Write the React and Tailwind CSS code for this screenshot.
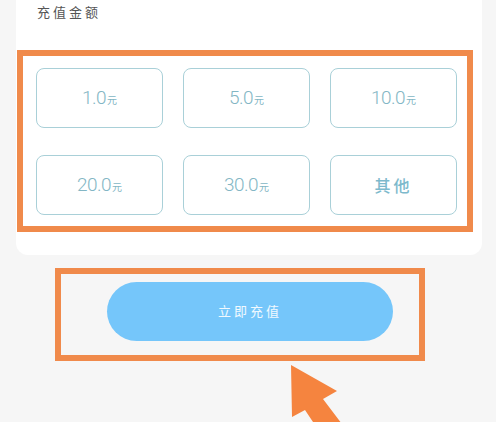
const amounts = ['1.0', '5.0', '10.0', '20.0', '30.0']

function AmountButton({ value }) {
  return (
    <div className="h-[60px] rounded-lg border border-[#a9d0d8] flex items-center justify-center bg-white">
      {value ? (
        <span className="text-[#83b6c4] flex items-baseline">
          <span className="text-[19px] [font-family:Roboto,sans-serif] font-light tracking-[-0.5px]">{value}</span>
          <span className="text-[10px] ml-px [font-family:'Noto_Sans_CJK_SC',sans-serif]">元</span>
        </span>
      ) : (
        <span className="text-[16px] font-medium tracking-[3px] text-[#7db9cc] [font-family:'Noto_Sans_CJK_SC',sans-serif]">其他</span>
      )}
    </div>
  )
}

export default function App() {
  return (
    <div className="relative w-[496px] h-[422px] overflow-hidden bg-[#f6f6f6] [font-family:'Noto_Sans','Noto_Sans_CJK_SC',sans-serif]">
      <div className="ml-4 w-[466px] bg-white rounded-b-xl pb-[23px]">
        <div className="pl-[21px] pt-[1px] h-[50px] text-[13px] leading-[22px] tracking-[3px] text-[#555]">充值金额</div>
        <div className="ml-px w-[456px] border-[6px] border-[#f08a4b] pt-3 pl-[13px] pr-[10px] pb-[11px]">
          <div className="grid grid-cols-3 gap-x-5 gap-y-[27px]">
            {amounts.map((a) => (
              <AmountButton key={a} value={a} />
            ))}
            <AmountButton />
          </div>
        </div>
      </div>

      <div className="ml-[55px] mt-[13px] w-[370px] border-[6px] border-[#f08a4b] pt-2 pl-[46px] pr-[26px] pb-[14px]">
        <button className="w-[286px] h-[59px] rounded-full bg-[#75c6fa] text-white/90 text-[13px] tracking-[3px]">
          立即充值
        </button>
      </div>

      <svg className="absolute left-[280px] top-[360px]" width="80" height="70" viewBox="280 360 80 70">
        <polygon points="291,365 337,391 323,399 348,432 325,440 305,410 292,417" fill="#f5843f" />
      </svg>
    </div>
  )
}
